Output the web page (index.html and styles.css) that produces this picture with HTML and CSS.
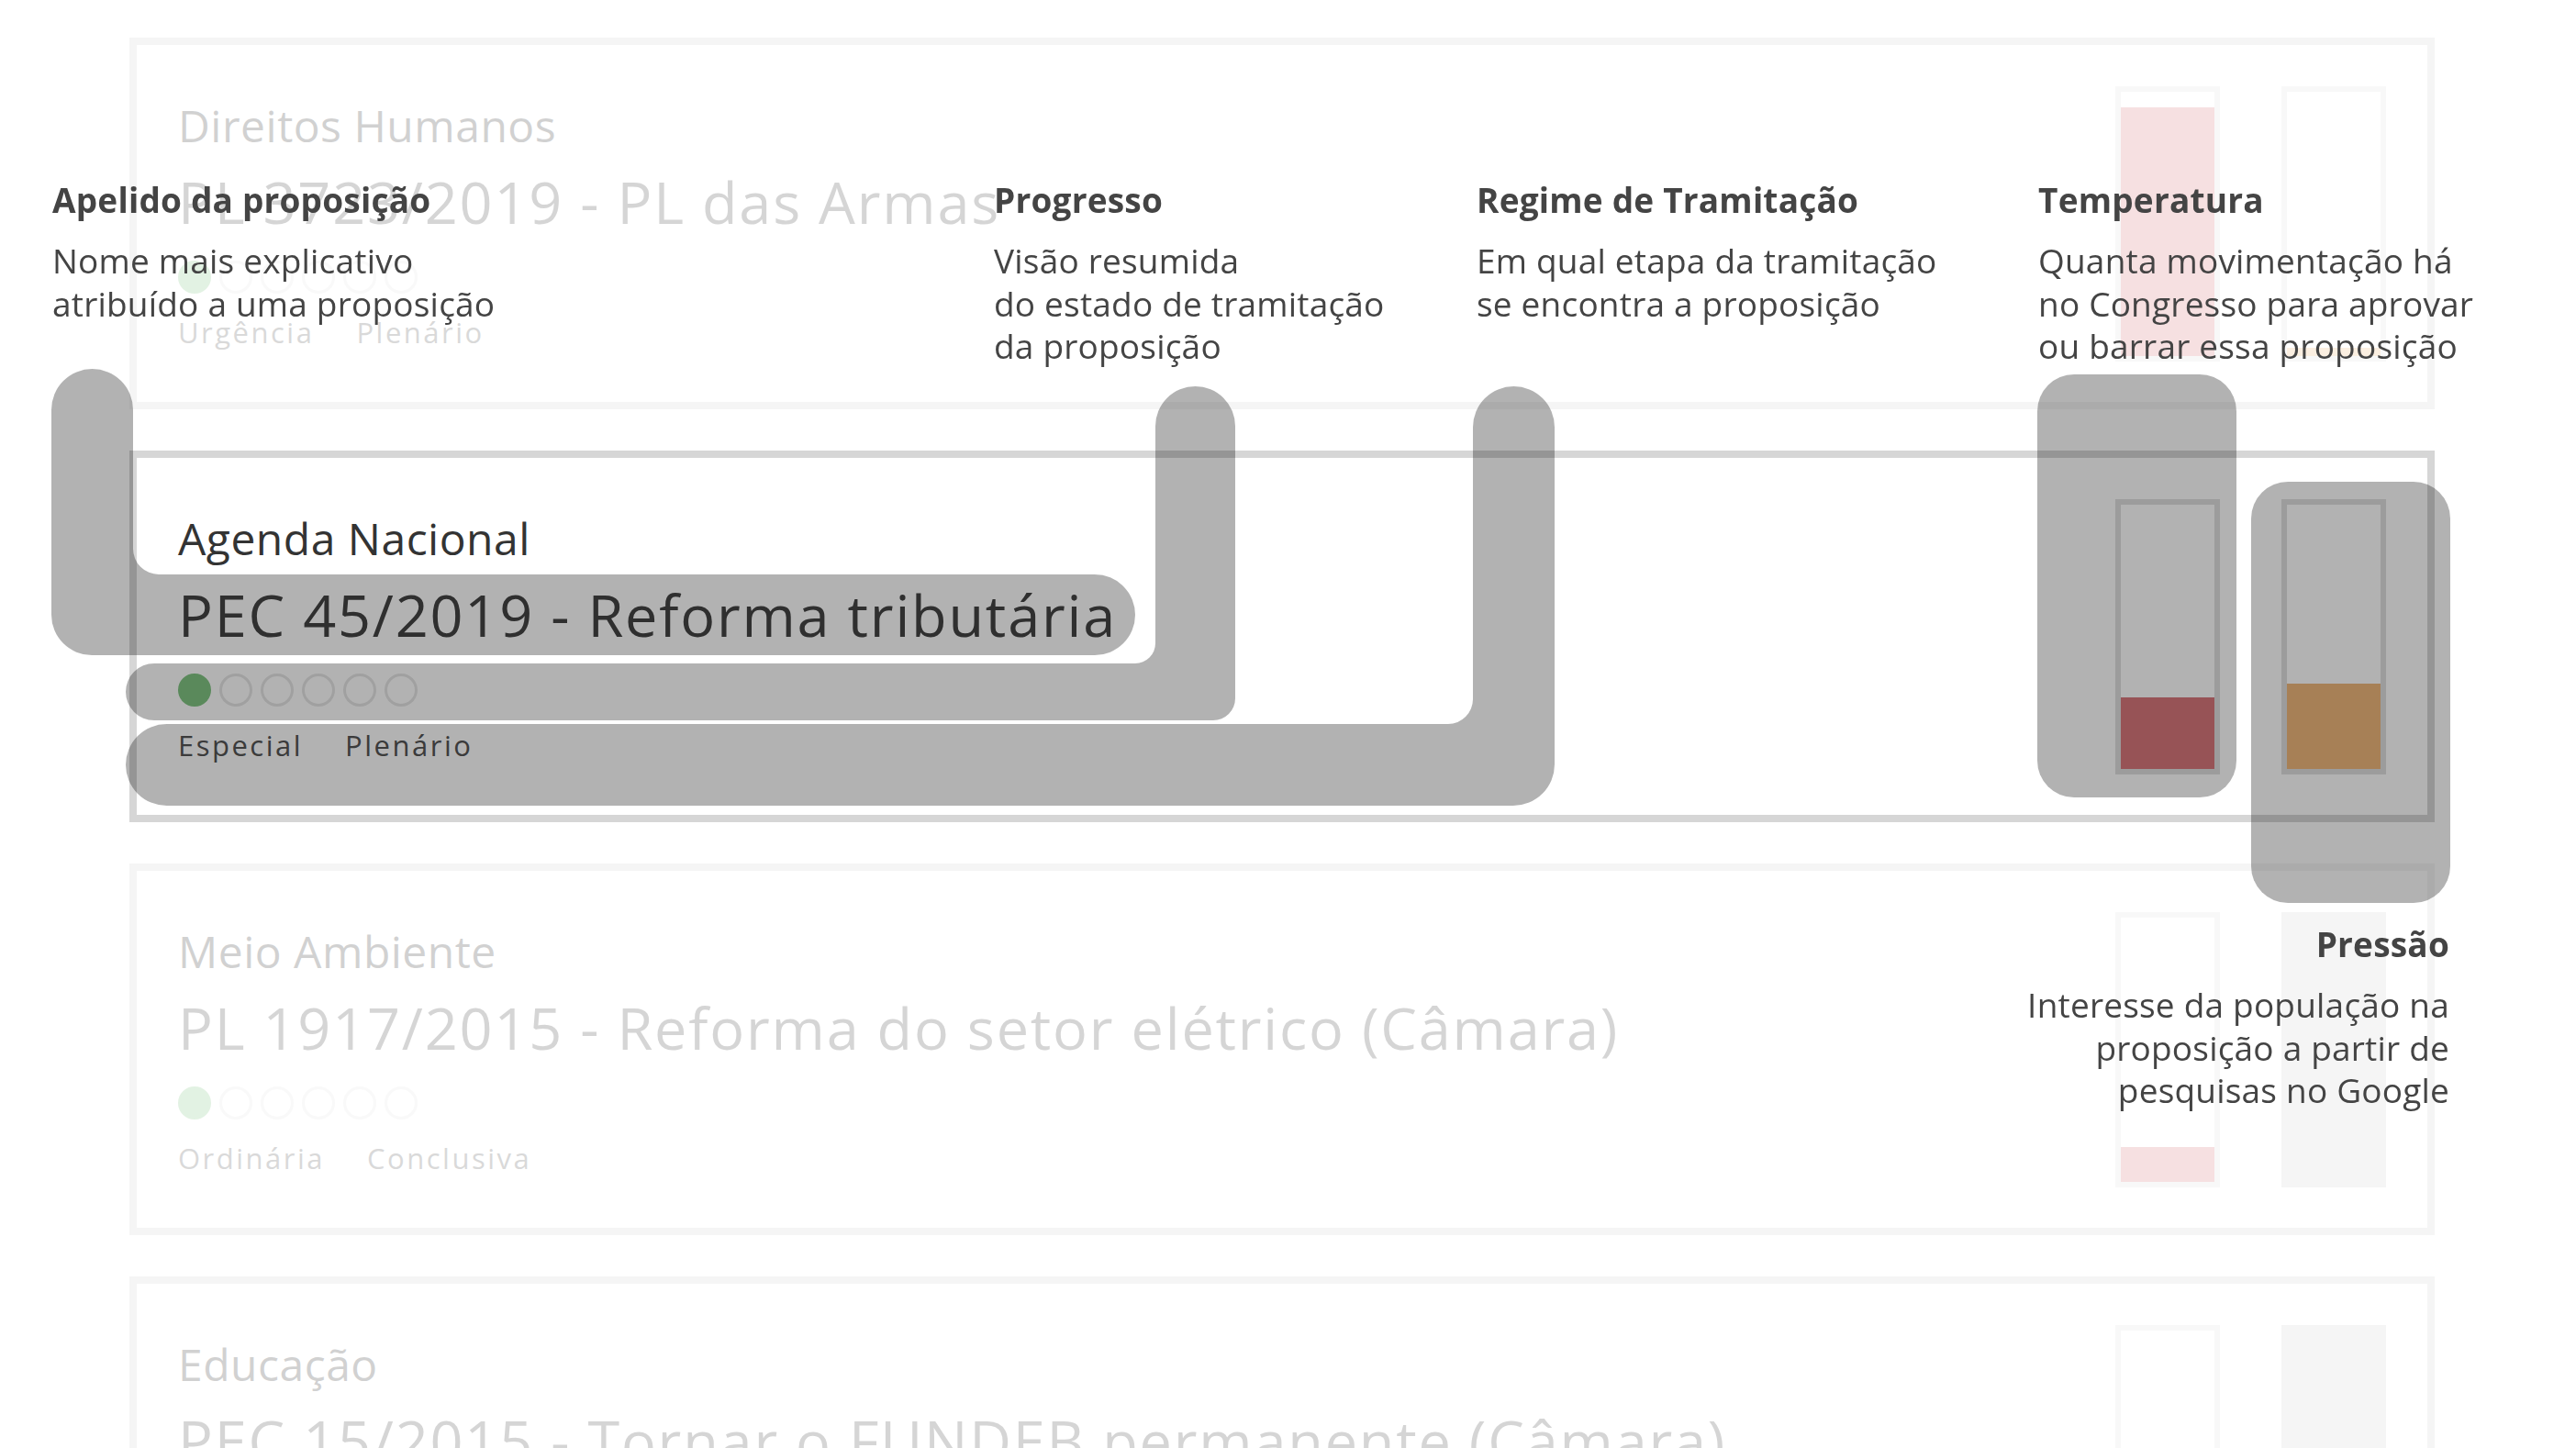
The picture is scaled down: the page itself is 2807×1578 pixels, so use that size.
FILE: index.html
```html
<!DOCTYPE html>
<html lang="pt-BR">
<head>
  <meta charset="UTF-8" />
  <title>Leggo - Tour</title>
  <link rel="stylesheet" href="styles.css">
</head>
<body>

<main class="lista">
  <article class="card apagado">
    <div class="info">
      <p class="tema">Direitos Humanos</p>
      <h2 class="apelido">PL 3723/2019 - PL das Armas</h2>
      <div class="progresso">
        <span class="dot on"></span><span class="dot"></span><span class="dot"></span><span class="dot"></span><span class="dot"></span><span class="dot"></span>
      </div>
      <div class="regime"><span>Urgência</span><span>Plenário</span></div>
    </div>
    <div class="medidores">
      <div class="barra temp"><div class="nivel" style="height: 94%"></div></div>
      <div class="barra pressao"><div class="nivel" style="height: 3%"></div></div>
    </div>
  </article>

  <article class="card foco">
    <div class="info">
      <p class="tema">Agenda Nacional</p>
      <h2 class="apelido">PEC 45/2019 - Reforma tributária</h2>
      <div class="progresso">
        <span class="dot on"></span><span class="dot"></span><span class="dot"></span><span class="dot"></span><span class="dot"></span><span class="dot"></span>
      </div>
      <div class="regime"><span>Especial</span><span>Plenário</span></div>
    </div>
    <div class="medidores">
      <div class="barra temp"><div class="nivel" style="height: 27%"></div></div>
      <div class="barra pressao"><div class="nivel" style="height: 32%"></div></div>
    </div>
  </article>

  <article class="card apagado">
    <div class="info">
      <p class="tema">Meio Ambiente</p>
      <h2 class="apelido">PL 1917/2015 - Reforma do setor elétrico (Câmara)</h2>
      <div class="progresso">
        <span class="dot on"></span><span class="dot"></span><span class="dot"></span><span class="dot"></span><span class="dot"></span><span class="dot"></span>
      </div>
      <div class="regime"><span>Ordinária</span><span>Conclusiva</span></div>
    </div>
    <div class="medidores">
      <div class="barra temp"><div class="nivel" style="height: 13%"></div></div>
      <div class="barra pressao vazia"></div>
    </div>
  </article>

  <article class="card apagado">
    <div class="info">
      <p class="tema">Educação</p>
      <h2 class="apelido">PEC 15/2015 - Tornar o FUNDEB permanente (Câmara)</h2>
      <div class="progresso">
        <span class="dot on"></span><span class="dot"></span><span class="dot"></span><span class="dot"></span><span class="dot"></span><span class="dot"></span>
      </div>
      <div class="regime"><span>Especial</span><span>Plenário</span></div>
    </div>
    <div class="medidores">
      <div class="barra temp"><div class="nivel" style="height: 0%"></div></div>
      <div class="barra pressao vazia"></div>
    </div>
  </article>
</main>

<!-- camada do tour: destaques + dicas -->
<div class="tour">
  <svg class="mascara" width="2807" height="1578" viewBox="0 0 2807 1578">
    <!-- apelido -->
    <path d="M56 446.5 A44.5 44.5 0 0 1 145 446.5 V598 A28 28 0 0 0 173 626 H1193 A44 44 0 0 1 1193 714 H100 A44 44 0 0 1 56 670 Z" />
    <!-- progresso -->
    <path d="M1259 464.5 A43.5 43.5 0 0 1 1346 464.5 V761 A24 24 0 0 1 1322 785 H168 A31 31 0 0 1 168 723 H1237 A22 22 0 0 0 1259 701 Z" />
    <!-- regime -->
    <path d="M1605 465.5 A44.5 44.5 0 0 1 1694 465.5 V833 A45 45 0 0 1 1649 878 H181.5 A44.5 44.5 0 0 1 181.5 789 H1578 A27 27 0 0 0 1605 762 Z" />
    <!-- temperatura / pressao -->
    <rect x="2220" y="408" width="217" height="461" rx="40" />
    <rect x="2453" y="525" width="217" height="459" rx="40" />
  </svg>

  <div class="dica dica-apelido">
    <h3>Apelido da proposição</h3>
    <p>Nome mais explicativo<br>atribuído a uma proposição</p>
  </div>
  <div class="dica dica-progresso">
    <h3>Progresso</h3>
    <p>Visão resumida<br>do estado de tramitação<br>da proposição</p>
  </div>
  <div class="dica dica-regime">
    <h3>Regime de Tramitação</h3>
    <p>Em qual etapa da tramitação<br>se encontra a proposição</p>
  </div>
  <div class="dica dica-temperatura">
    <h3>Temperatura</h3>
    <p>Quanta movimentação há<br>no Congresso para aprovar<br>ou barrar essa proposição</p>
  </div>
  <div class="dica dica-pressao">
    <h3>Pressão</h3>
    <p>Interesse da população na<br>proposição a partir de<br>pesquisas no Google</p>
  </div>
</div>

</body>
</html>
```

FILE: styles.css
```css
* { box-sizing: border-box; }
html, body {
  margin: 0;
  height: 100%;
  overflow: hidden;
  background: #fff;
}
body {
  font-family: 'Open Sans', sans-serif;
  color: #444;
}

/* lista de proposições */
.lista {
  display: flex;
  flex-direction: column;
  gap: 45px;
  padding: 41px 154px 0 141px;
}
.card {
  flex: none;
  display: flex;
  align-items: center;
  justify-content: space-between;
  height: 405px;
  border: 8px solid #d6d6d6;
  background: #fff;
  padding: 0 45px;
}
.card.apagado { opacity: 0.22; }

.info {
  align-self: flex-start;
  padding-top: 60px;
}
.tema {
  margin: 0;
  font-size: 48px;
  line-height: 56px;
  font-weight: 400;
  letter-spacing: 0.5px;
  color: #333;
}
.apelido {
  margin: 15px 0 0;
  font-size: 63px;
  line-height: 80px;
  font-weight: 400;
  letter-spacing: 1.8px;
  color: #444;
  white-space: nowrap;
}
.progresso {
  display: flex;
  gap: 9px;
  margin-top: 24px;
}
.dot {
  width: 36px;
  height: 36px;
  border-radius: 50%;
  border: 3px solid #e6e6e6;
}
.dot.on { background: #81c583; border-color: #81c583; }
.regime {
  display: flex;
  gap: 46px;
  margin-top: 22px;
  font-size: 31px;
  line-height: 40px;
  letter-spacing: 2.5px;
  color: #555;
}

.medidores { display: flex; gap: 67px; }
.barra {
  width: 114px;
  height: 300px;
  border: 6px solid #e0e0e0;
  display: flex;
  flex-direction: column;
  justify-content: flex-end;
}
.barra.vazia { background: #d4d4d4; border-color: #d4d4d4; }
.temp .nivel { background: #d9777b; }
.pressao .nivel { background: #f0b87b; }

/* tour */
.tour {
  position: fixed;
  inset: 0;
}
.mascara {
  position: absolute;
  top: 0;
  left: 0;
  fill: rgba(0, 0, 0, 0.3);
}
.dica {
  position: absolute;
  top: 195px;
  color: #444;
  white-space: nowrap;
  font-size: 37px;
  letter-spacing: 0.2px;
}
.dica h3 {
  margin: 0;
  font-size: 37px;
  line-height: 46px;
  font-weight: 700;
}
.dica p {
  margin: 20px 0 0;
  line-height: 46.5px;
}
.dica-apelido { left: 57px; }
.dica-progresso { left: 1083px; }
.dica-regime { left: 1609px; }
.dica-temperatura { left: 2221px; }
.dica-pressao {
  top: 1006px;
  right: 138px;
  text-align: right;
}
```
